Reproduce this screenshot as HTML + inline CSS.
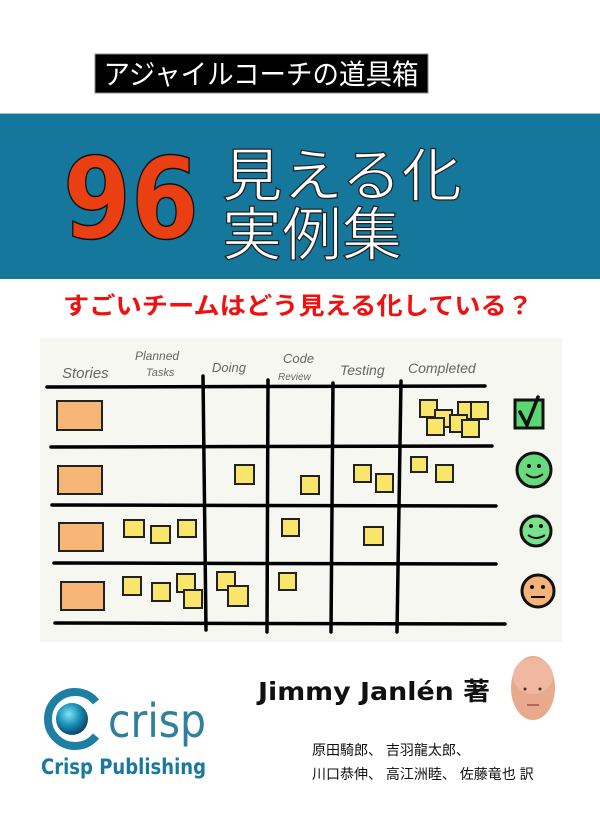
<!DOCTYPE html>
<html><head><meta charset="utf-8"><style>
html,body{margin:0;padding:0;background:#fff;width:600px;height:818px;overflow:hidden}
svg{display:block}
.jp{font-family:"Liberation Sans","Noto Sans CJK JP",sans-serif}
</style></head><body>
<svg width="600" height="818" viewBox="0 0 600 818" xmlns="http://www.w3.org/2000/svg">
<rect width="600" height="818" fill="#fff"/>
<rect x="95" y="54" width="333" height="39" fill="#000" stroke="#888" stroke-width="1"/>
<text x="261" y="84" text-anchor="middle" class="jp" font-size="28" fill="#fff" textLength="315" lengthAdjust="spacingAndGlyphs">アジャイルコーチの道具箱</text>
<rect x="0" y="114" width="600" height="165" fill="#15779c"/>
<rect x="0" y="113" width="600" height="1" fill="#9cc6d6"/>
<text x="131" y="238" text-anchor="middle" font-family="DejaVu Sans,sans-serif" font-weight="bold" font-size="112" fill="#ea3f12" stroke="#111" stroke-width="1.5" textLength="136" lengthAdjust="spacingAndGlyphs">96</text>
<text x="222" y="196" class="jp" font-size="58" fill="#fff" stroke="#222" stroke-width="1.2" textLength="240" lengthAdjust="spacingAndGlyphs">見える化</text>
<text x="222" y="255" class="jp" font-size="58" fill="#fff" stroke="#222" stroke-width="1.2" textLength="180" lengthAdjust="spacingAndGlyphs">実例集</text>
<text x="298" y="314" text-anchor="middle" class="jp" font-weight="bold" font-size="24" fill="#f01010" textLength="470" lengthAdjust="spacingAndGlyphs">すごいチームはどう見える化している？</text>
<rect x="40" y="338" width="522" height="304" fill="#f7f7f1"/>
<g font-family="Liberation Sans,sans-serif" fill="#666" font-size="15" font-style="italic">
<text x="62" y="378">Stories</text>
<text x="135" y="360" font-size="12">Planned</text>
<text x="146" y="376" font-size="11">Tasks</text>
<text x="212" y="372" font-size="13">Doing</text>
<text x="283" y="363" font-size="13">Code</text>
<text x="278" y="380" font-size="10">Review</text>
<text x="340" y="375" font-size="14">Testing</text>
<text x="408" y="373" font-size="14">Completed</text>
</g>
<g stroke="#000" stroke-width="3.5" stroke-linecap="round" fill="none">
<path d="M47 387 L485 386"/>
<path d="M51 447 L492 446"/>
<path d="M52 505 L496 506"/>
<path d="M54 563 L496 564"/>
<path d="M55 623 L505 624"/>
<path d="M203 376 L206 630"/>
<path d="M268 380 L267 632"/>
<path d="M333 383 L331 632"/>
<path d="M401 381 L397 632"/>
</g>
<g fill="#f7b675" stroke="#222" stroke-width="2">
<rect x="57" y="401" width="45" height="29"/>
<rect x="58" y="466" width="44" height="28"/>
<rect x="59" y="523" width="44" height="28"/>
<rect x="61" y="582" width="43" height="28"/>
</g>
<g fill="#f8e66a" stroke="#222" stroke-width="2">
<rect x="420" y="400" width="17" height="17"/><rect x="435" y="410" width="17" height="17"/><rect x="458" y="402" width="17" height="17"/><rect x="450" y="415" width="17" height="17"/><rect x="471" y="402" width="17" height="17"/><rect x="427" y="418" width="17" height="17"/><rect x="462" y="420" width="17" height="17"/>
<rect x="235" y="465" width="19" height="19"/><rect x="301" y="476" width="18" height="18"/>
<rect x="354" y="465" width="17" height="17"/><rect x="376" y="474" width="17" height="18"/>
<rect x="411" y="457" width="16" height="15"/><rect x="436" y="465" width="17" height="17"/>
<rect x="124" y="520" width="20" height="17"/><rect x="151" y="526" width="19" height="17"/><rect x="178" y="520" width="18" height="17"/>
<rect x="282" y="519" width="17" height="17"/><rect x="364" y="527" width="19" height="18"/>
<rect x="123" y="577" width="18" height="18"/><rect x="152" y="583" width="18" height="18"/><rect x="177" y="574" width="18" height="18"/><rect x="184" y="590" width="18" height="18"/>
<rect x="217" y="572" width="18" height="18"/><rect x="228" y="586" width="20" height="20"/>
<rect x="279" y="573" width="17" height="17"/>
</g>
<rect x="515" y="400" width="28" height="28" fill="#5bd873" stroke="#111" stroke-width="3"/>
<path d="M520 412 L527 425 L538 397" stroke="#111" stroke-width="3.5" fill="none" stroke-linecap="round"/>
<g stroke="#111" stroke-width="3">
<circle cx="534" cy="470" r="17" fill="#66da7d"/>
<circle cx="536" cy="531" r="15" fill="#7ae08c"/>
<circle cx="538" cy="591" r="16" fill="#f4b37a"/>
</g>
<g fill="#111"><circle cx="529" cy="466" r="2"/><circle cx="539" cy="466" r="2"/><circle cx="531" cy="526" r="2"/><circle cx="541" cy="526" r="2"/><circle cx="532" cy="587" r="2"/><circle cx="543" cy="587" r="2"/></g>
<g stroke="#111" stroke-width="2" fill="none"><path d="M526 474 Q534 481 543 474"/><path d="M528 535 Q536 541 545 535"/><path d="M531 597 L545 597"/></g>
<defs><radialGradient id="g" cx="0.4" cy="0.35" r="0.7"><stop offset="0" stop-color="#7fe3f5"/><stop offset="0.5" stop-color="#1a8fb8"/><stop offset="1" stop-color="#0a3a5a"/></radialGradient></defs>
<path d="M96 702 A27 27 0 1 0 96 736" stroke="#1e7fa2" stroke-width="8" fill="none"/>
<circle cx="72" cy="719" r="16" fill="url(#g)"/>
<text x="108" y="737" font-family="DejaVu Sans,sans-serif" font-size="46" fill="#2f7f9d" textLength="98" lengthAdjust="spacingAndGlyphs">crisp</text>
<text x="41" y="774" font-family="DejaVu Sans,sans-serif" font-weight="bold" font-size="21" fill="#1a78a0" textLength="165" lengthAdjust="spacingAndGlyphs">Crisp Publishing</text>
<text x="258" y="700" font-family="DejaVu Sans,'Noto Sans CJK JP',sans-serif" font-weight="bold" font-size="25" fill="#111" textLength="232" lengthAdjust="spacingAndGlyphs">Jimmy Janlén 著</text>
<ellipse cx="533" cy="688" rx="22" ry="32" fill="#e9a98d"/>
<ellipse cx="533" cy="676" rx="20" ry="18" fill="#f0b8a0"/>
<g fill="#333"><circle cx="525" cy="689" r="1.5"/><circle cx="540" cy="689" r="1.5"/></g>
<path d="M527 705 L539 705" stroke="#a05050" stroke-width="1.5"/>
<text x="312" y="755" class="jp" font-size="14" fill="#111">原田騎郎、 吉羽龍太郎、</text>
<text x="312" y="779" class="jp" font-size="14" fill="#111">川口恭伸、 高江洲睦、 佐藤竜也 訳</text>
</svg>
</body></html>
